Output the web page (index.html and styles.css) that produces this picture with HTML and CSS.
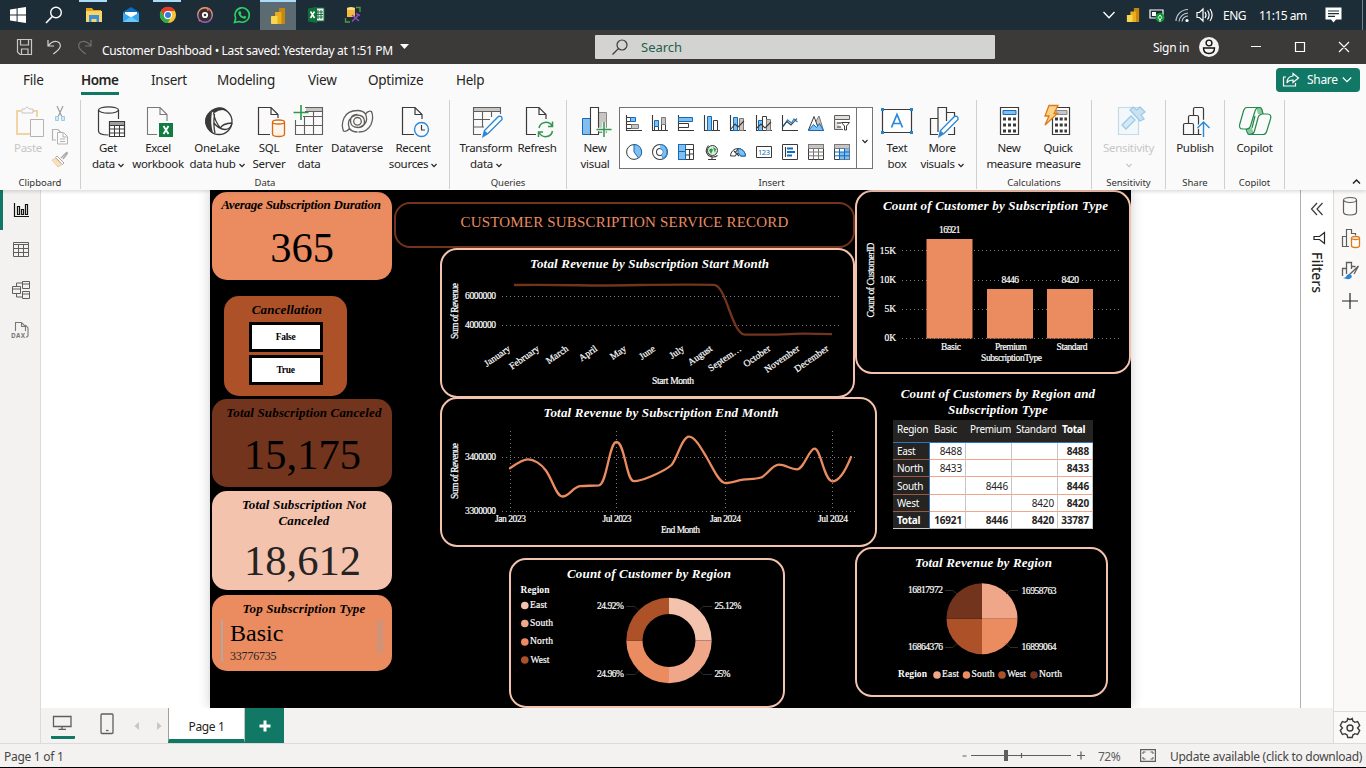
FILE: index.html
```html
<!DOCTYPE html>
<html lang="en">
<head>
<meta charset="utf-8">
<title>Customer Dashboad</title>
<link rel="stylesheet" href="styles.css">
</head>
<body>
<svg width="0" height="0" class="defs">
  <defs>
    <symbol id="pbi" viewBox="0 0 16 18"><rect x="9" y="1" width="6" height="16" rx=".7" fill="#c9860f"/><rect x="5" y="5" width="6.5" height="12" rx=".7" fill="#e8ae1c"/><rect x="1" y="9" width="6.5" height="8" rx=".7" fill="#f8d64e"/></symbol>
    <symbol id="chev" viewBox="0 0 6 5"><path d="M.5 1l2.5 2.6L5.500 1" fill="none" stroke="currentColor" stroke-width="1.200"/></symbol>
  </defs>
</svg>
<header class="taskbar">
  <div class="apps">
    <span class="app sys"><svg width="18" height="18"><path d="M1 3.500l6.600-1v6H1zM8.600 2.300L17 1v7.500H8.600zM1 9.500h6.600v6L1 14.600zM8.600 9.500H17V17l-8.400-1.200z" fill="#fff"/></svg></span>
    <span class="app sys"><svg width="18" height="18"><circle cx="11" cy="6.500" r="5.300" fill="none" stroke="#fff" stroke-width="1.400"/><path d="M7.300 10.500L1 17" stroke="#fff" stroke-width="1.600"/></svg></span>
    <span class="app gap open"><svg width="18" height="18"><path d="M1 2h6l1.500 2H16v12H1z" fill="#e8a317"/><path d="M1 5h16v11H1z" fill="#fbd567"/><path d="M4 9h10v7h-2.500v-3h-5v3H4z" fill="#3f8edb"/></svg></span>
    <span class="app"><svg width="18" height="18"><path d="M1 6l8-5 8 5v10H1z" fill="#0f6cbd"/><path d="M3 6h12v6H3z" fill="#fff"/><path d="M1 6.500l8 5 8-5V16H1z" fill="#35a7ee"/><path d="M1 16l8-5.500L17 16z" fill="#67c8fa"/></svg></span>
    <span class="app open"><svg width="18" height="18"><circle cx="9" cy="9" r="8" fill="#f7c52d"/><path d="M2 5a8 8 0 0 1 14 0H9a4 4 0 0 0-3.500 6z" fill="#e33b2e"/><path d="M2 5l4 7a4 4 0 0 0 5 .7L9 17A8 8 0 0 1 2 5z" fill="#2da94f"/><circle cx="9" cy="9" r="4" fill="#fff"/><circle cx="9" cy="9" r="3" fill="#2f7de1"/></svg></span>
    <span class="app"><svg width="18" height="18"><defs><linearGradient id="gr" x1="0" y1="0" x2="0" y2="1"><stop offset="0" stop-color="#f4a261"/><stop offset="1" stop-color="#9a5fd0"/></linearGradient></defs><circle cx="9" cy="9" r="7.300" fill="#39302f" stroke="url(#gr)" stroke-width="1.400"/><circle cx="9" cy="9" r="2.200" fill="none" stroke="#fff" stroke-width="1.800"/><path d="M11 4l3-1M4 14l-1 1" stroke="#e06666" stroke-width="2"/></svg></span>
    <span class="app"><svg width="18" height="18"><path d="M1.500 16.500l1.200-4.200A7.200 7.200 0 1 1 6 15.500z" fill="none" stroke="#2bd366" stroke-width="1.600"/><path d="M6.200 5.200l1.300 0 .9 2-.8 1q.9 1.700 2.700 2.500l1-1 2 1q0 2-2 2-4.800-.8-6-5.500 0-1.300.9-2z" fill="#2bd366"/></svg></span>
    <span class="app active"><svg width="16" height="18"><use href="#pbi"/></svg></span>
    <span class="app"><svg width="18" height="18"><rect x="7" y="2" width="10" height="13" fill="#e9f3ec" stroke="#1d7145"/><path d="M11 4v9M14 4v9M9 6h7M9 8.500h7M9 11h7" stroke="#1d7145"/><path d="M1 2.500L10 1v16l-9-1.500z" fill="#10703c"/><path d="M3.500 5.500l4 6.500M7.500 5.500l-4 6.500" stroke="#fff" stroke-width="1.500"/></svg></span>
    <span class="app"><svg width="18" height="18"><path d="M3 2h8v9H3z" fill="#f6b93b"/><ellipse cx="7" cy="2.500" rx="4" ry="1.500" fill="#ffdf7d"/><path d="M12 1.500h4V6M1.500 12v4H6" fill="none" stroke="#4f9b45" stroke-width="1.300"/><path d="M8 9l7 6M15 8.500l-7 7M12 7.500l4 2" stroke="#8e4bb8" stroke-width="1.600"/></svg></span>
  </div>
  <div class="tray">
    <svg class="t1" width="14" height="10"><path d="M1.500 2L7 7.800 12.500 2" fill="none" stroke="#fff" stroke-width="1.300"/></svg>
    <svg class="t2" width="14" height="18"><use href="#pbi"/></svg>
    <svg class="t3" width="18" height="16"><path d="M1 3h13v8H1z" fill="none" stroke="#fff" stroke-width="1.200"/><path d="M3 5h4v4H3z" fill="#fff"/><circle cx="11" cy="10.500" r="4.500" fill="#129b36"/><path d="M11 8l1.800 2.500L11 13l-1.800-2.500zM11 12v3" fill="none" stroke="#fff"/></svg>
    <svg class="t4" width="16" height="16"><g fill="none" stroke="#c3cace" stroke-width="1.200"><path d="M1 14A12 12 0 0 1 13 2.500M4 14.500A9.500 9.500 0 0 1 13 6M7 14.500a6.500 6.500 0 0 1 6-5.500"/></g><circle cx="12" cy="13.500" r="1.600" fill="#fff"/></svg>
    <svg class="t5" width="18" height="16"><g fill="none" stroke="#fff" stroke-width="1.200"><path d="M1 5.500h2.500L7 2v12L3.500 10.500H1zM9 5q2 3 0 6M11.500 3.500q3.200 4.500 0 9M14 2q4.200 6 0 12"/></g></svg>
    <span class="lang">ENG</span><span class="clock">11:15 am</span>
    <svg class="t6" width="17" height="17"><path d="M.5.500h16v12H11l-2.500 3-2.500-3H.5z" fill="#fff"/><path d="M3 4h11M3 6.700h11M3 9.400h7" stroke="#1d2e38" stroke-width="1.200"/></svg>
    <i class="peek"></i>
  </div>
</header>

<div class="titlebar">
  <svg class="save" width="18" height="18"><path d="M1.500 1.500h14v15H4l-2.500-2.500zM4.500 1.500v5.500h8V1.500M5.500 16v-5h6.500v5" fill="none" stroke="#c9c8c7" stroke-width="1.200"/></svg>
  <svg class="undo" width="18" height="18"><path d="M2 2v6h6M2 8q4-5 8.500-4.500 3.800.5 3.800 4.500 0 3-7 8" fill="none" stroke="#d6d5d4" stroke-width="1.200"/></svg>
  <svg class="redo" width="18" height="18"><path d="M15 2v6H9M15 8Q11 3 6.500 3.500 2.700 4 2.700 8q0 3 7 8" fill="none" stroke="#73716f" stroke-width="1.200"/></svg>
  <span class="doc">Customer Dashboad • Last saved: Yesterday at 1:51 PM</span>
  <svg class="caret" width="9" height="6"><path d="M0 0h9L4.500 5z" fill="#fff"/></svg>
  <div class="search"><svg width="18" height="18"><circle cx="11" cy="7" r="5" fill="none" stroke="#3b3a39" stroke-width="1.200"/><path d="M7.400 10.600L1.500 16.500" stroke="#3b3a39" stroke-width="1.300"/></svg><span>Search</span></div>
  <span class="signin">Sign in</span>
  <svg class="avatar" width="20" height="20"><circle cx="10" cy="10" r="10" fill="#f3f2f1"/><circle cx="10" cy="6" r="2.900" fill="none" stroke="#111" stroke-width="1.400"/><path d="M4.500 11h11q0 5.500-5.500 5.500T4.500 11z" fill="none" stroke="#111" stroke-width="1.400"/></svg>
  <svg class="winctl" width="100" height="14"><path d="M1 6.500h10M45.500 2.500h9v9h-9zM89 2l10 10M99 2L89 12" fill="none" stroke="#fff" stroke-width="1.200"/></svg>
</div>

<nav class="menu">
  <a class="m-file">File</a><a class="m-home"><b>Home</b></a><a class="m-insert">Insert</a><a class="m-model">Modeling</a><a class="m-view">View</a><a class="m-opt">Optimize</a><a>Help</a>
  <button class="share"><svg width="18" height="16"><path d="M4 5H1.500v9h12v-3M11 1.500L16.500 6 11 10.500V8Q6.500 8 5 11q0-6.500 6-7z" fill="none" stroke="#fff" stroke-width="1.200"/></svg><span>Share</span><svg width="10" height="8"><path d="M.8 1.500L5 5.700l4.200-4.200" fill="none" stroke="#fff" stroke-width="1.200"/></svg></button>
</nav>

<section class="ribbon">
  <div class="group g-clip"><div class="items">
    <div class="btn w-paste off"><svg class="ic" width="32" height="32"><path d="M9 6H5v23h14M21 6h4v6" fill="none" stroke="#f3d3a5" stroke-width="2"/><path d="M10 4h3q2-4 4 0h4v4H10z" fill="#fafafa" stroke="#c8c6c4"/><path d="M18.500 14.500h13v17h-13z" fill="#fafafa" stroke="#b5b3b1"/></svg><span>Paste</span></div>
    <div class="tools">
      <svg width="18" height="17"><path d="M6 1l5 11M12 1L7 12" stroke="#a19f9d" stroke-width="1.200"/><path d="M4.500 11.500h3v4h-3zM10.500 11.500h3v4h-3z" fill="#d5e9f5" stroke="#9ccbe9"/></svg>
      <svg width="18" height="17"><path d="M5 12H1.500V1.500H7l3 3" fill="none" stroke="#b5b3b1" stroke-width="1.200"/><path d="M6.500 4.500h6l4 4v7.500h-10zM12 5v4h4M9 11h5M9 13.500h5" fill="#fafafa" stroke="#b5b3b1"/></svg>
      <svg width="18" height="17"><path d="M10 7l4-4q3-3 2 0l-4 5" fill="none" stroke="#a8a6a4" stroke-width="1.300"/><path d="M6 5l7 7-1.500 1.500-7-7z" fill="#fff" stroke="#a8a6a4"/><path d="M4 7.500l7 6-4 2.500L1 9z" fill="#fbe0bd" stroke="#f0cda0"/></svg>
    </div>
  </div><h4>Clipboard</h4></div>

  <div class="group g-data"><div class="items">
    <div class="btn w54"><svg class="ic" width="32" height="32"><path d="M6.500 5v21q0 4 10 4M26.500 5v9" fill="none" stroke="#3b3a39" stroke-width="1.200"/><ellipse cx="16.500" cy="5" rx="10" ry="3.200" fill="none" stroke="#3b3a39" stroke-width="1.200"/><path d="M17.500 16.500h15v15h-15z" fill="#fff" stroke="#3b3a39" stroke-width="1.200"/><path d="M18 17h14v3H18z" fill="#a19f9d"/><path d="M17.500 20.500h15M17.500 24h15M17.500 28h15M22.500 20v11.500M27.500 20v11.500" stroke="#3b3a39"/></svg><span>Get</span><span>data <svg class="cv"><use href="#chev"/></svg></span></div>
    <div class="btn w46"><svg class="ic" width="32" height="32"><path d="M15 29.500H5.500v-27H18l7 7V16M18 2.500v7h7" fill="none" stroke="#7a7876" stroke-width="1.100"/><path d="M17 18h14v14H17z" fill="#107c41"/><path d="M21.500 21l5 8M26.500 21l-5 8" stroke="#fff" stroke-width="1.800"/></svg><span>Excel</span><span>workbook</span></div>
    <div class="btn w72"><svg class="ic" width="32" height="32"><circle cx="18" cy="16.500" r="13" fill="#fafafa" stroke="#3b3a39" stroke-width="1.300"/><path d="M10.500 6.500Q14 2 19 2.200q5 .3 7.500 3.800-7-2.500-13 2z" fill="#3b3a39"/><path d="M11 6.500Q3.500 9 4 17q.5 6.500 8 11-3-10-1-21.500z" fill="#3b3a39"/><path d="M12.500 7.500Q14 17 19.500 23q2-4.500 11.500-5M13.500 9Q12 20 14 28M31 18q-1 6-7 6.500-6 0-11.500-7" fill="none" stroke="#3b3a39" stroke-width="1.300"/></svg><span>OneLake</span><span>data hub<svg class="cv"><use href="#chev"/></svg></span></div>
    <div class="btn w32"><svg class="ic" width="32" height="32"><path d="M17 29.500H5.500v-27H18l7 7V13M18 2.500v7h7" fill="none" stroke="#3b3a39" stroke-width="1.200"/><path d="M19.500 17v12q0 2.500 6 2.500t6-2.500V17" fill="#fff4ea" stroke="#d8690f" stroke-width="1.300"/><ellipse cx="25.500" cy="17" rx="6" ry="2" fill="#fff" stroke="#d8690f" stroke-width="1.300"/></svg><span>SQL</span><span>Server</span></div>
    <div class="btn w48"><svg class="ic" width="32" height="32"><path d="M13 2.500h17v4H13z" fill="#c8c6c4"/><path d="M12 2.500h17.500v27h-27V15M2.500 20.500h27M10 11.500h19.500M11.500 12v17.500M20.500 6.500v23M12 6.500h17.500" fill="none" stroke="#605e5c" stroke-width="1.100"/><path d="M8 0v15M.5 7.500h15" stroke="#2d9947" stroke-width="1.600"/></svg><span>Enter</span><span>data</span></div>
    <div class="btn w48"><svg class="ic" width="32" height="32"><g fill="none" stroke="#605e5c" stroke-width="1.300"><path d="M16.500 5.500q5.500 0 8 3.500 3-4 6-2.500 2.500 6-.5 13-3.500 7.500-12.500 7.500M16.500 27q-5.500 0-8-3.500-3 4-6 2.500Q0 20 3 13q3.500-7.500 13.500-7.500M24.500 9q4 10-7 13.500-8 0-8-6.500t7-6.500M8.500 23.500Q4.500 13.500 15.500 10q8 0 8 6.500t-7 6"/><circle cx="16.500" cy="16.300" r="3.800"/></g></svg><span>Dataverse</span></div>
    <div class="btn w64"><svg class="ic" width="32" height="32"><path d="M17 29.500H5.500v-27H18l7 7V14M18 2.500v7h7" fill="none" stroke="#3b3a39" stroke-width="1.200"/><circle cx="24.500" cy="24.500" r="7" fill="#fafafa" stroke="#2b88d8" stroke-width="1.400"/><path d="M24.500 20v5H28" fill="none" stroke="#3b3a39" stroke-width="1.200"/></svg><span>Recent</span><span>sources<svg class="cv"><use href="#chev"/></svg></span></div>
  </div><h4>Data</h4></div>

  <div class="group g-query"><div class="items">
    <div class="btn w72"><svg class="ic" width="32" height="32"><path d="M3.500 2.500h27v4h-27z" fill="#c8c6c4"/><path d="M30.500 9V2.500h-27v27H11M3.500 6.500h27M3.500 14.500H20M3.500 22H14M12.500 6.500V22M21.500 6.500V12" fill="none" stroke="#605e5c" stroke-width="1.100"/><path d="M28.500 11.500q4-1 3.500 3L18 28.500l-5 3 1.500-6z" fill="#fff" stroke="#2b88d8" stroke-width="1.400"/><path d="M14.500 25.500l3.500 3-5 3z" fill="#2b88d8"/></svg><span>Transform</span><span>data <svg class="cv"><use href="#chev"/></svg></span></div>
    <div class="btn w30"><svg class="ic" width="32" height="32"><path d="M15 29.500H5.500v-27H18l7 7V14M18 2.500v7h7" fill="none" stroke="#3b3a39" stroke-width="1.200"/><path d="M18 23a7 7 0 0 1 13-2M31.500 26a7 7 0 0 1-13 2M31.500 16.500V21.500H27M17.500 32v-5H22" fill="none" stroke="#31964b" stroke-width="1.500"/></svg><span>Refresh</span></div>
  </div><h4>Queries</h4></div>

  <div class="group g-insert"><div class="items">
    <div class="btn w46"><svg class="ic" width="32" height="32"><path d="M3.500 13.500h8v16h-8z" fill="#83beec" stroke="#0f6cbd"/><path d="M19.500 7.500h8v20h-8z" fill="#c8c6c4" stroke="#8a8886"/><path d="M11.500 2.500h8v27h-8z" fill="#fff" stroke="#3b3a39" stroke-width="1.100"/><path d="M25 17v15M17.500 24.500h15" stroke="#fafafa" stroke-width="3.500"/><path d="M25 17v15M17.500 24.500h15" stroke="#31964b" stroke-width="1.500"/></svg><span>New</span><span>visual</span></div>
    <div class="gallery">
      <div class="gal-grid">
        <svg width="16" height="16"><path d="M.5 0v15.500H16" class="ax"/><path d="M.5 2.500h4v4h-4z" class="dk"/><path d="M4.500 2.500h5v4h-5z" class="bl"/><path d="M.5 9.500h5v4h-5z" class="dk"/><path d="M5.500 9.500h7v4h-7z" class="gy"/></svg>
        <svg width="16" height="16"><path d="M.5 0v15.500H16" class="ax"/><path d="M2.500 11.500h4v4h-4zM9.500 9.500h4v6h-4z" class="dk"/><path d="M2.500 5.500h4v6h-4z" class="bl"/><path d="M9.500 2.500h4v7h-4z" class="gy"/></svg>
        <svg width="16" height="16"><path d="M.5 0v15.500H16" class="ax"/><path d="M.5 2.500h14v4H.5z" class="bl"/><path d="M.5 8.500h10v4H.5z" class="dk"/></svg>
        <svg width="16" height="16"><path d="M.5 0v15.500H16" class="ax"/><path d="M3.500 1.500h4v14h-4z" class="bl"/><path d="M9.500 5.500h4v10h-4z" class="dk"/></svg>
        <svg width="16" height="16"><path d="M.5 0v15.500H16" class="ax"/><path d="M3.500 2.500h4v13h-4z" class="bl"/><path d="M9.500 3.500h4v12h-4z" class="gy"/><path d="M1 14l4-5 3 3 6-6" class="ax"/></svg>
        <svg width="16" height="16"><path d="M.5 0v15.500H16" class="ax"/><path d="M2.500 5.500h4v10h-4z" class="bl"/><path d="M6.500 1.500h4v14h-4z" class="dk"/><path d="M10.500 4.500h4v11h-4z" class="gy"/><path d="M1 13l4-4 4 4 6-6" class="ax"/></svg>
        <svg width="16" height="16"><path d="M.5 0v15.500H16" class="ax"/><path d="M1 12l4.500-7 4 3 2.500-4 3.500 3" fill="none" stroke="#2b88d8" stroke-width="1.300"/><path d="M1 11l4-4.500 4 3.500 6-6.500" class="ax"/></svg>
        <svg width="16" height="16"><path d="M7 8l4-7 4.500 14.500z" class="gy"/><path d="M.5 15L6 1.500 11 15z" class="dk"/><path d="M.5 15.500l5-6 3 3 3-4 4 7z" class="bl"/></svg>
        <svg width="16" height="16"><path d="M.5.500h15v4H.5zM.5 4.500v10H9" class="gy2"/><path d="M3 7h4v2H3zM3 11h4v2H3z" fill="#8a8886"/><path d="M7.500 7.500h8l-3 3.500v4h-2v-4z" class="dk"/></svg>
        <svg width="16" height="16"><circle cx="8" cy="8" r="7.400" class="dk"/><path d="M8 8V.6A7.400 7.400 0 0 1 12.500 14z" class="bl"/></svg>
        <svg width="16" height="16"><circle cx="8" cy="8" r="5.500" fill="none" stroke="#3b3a39" stroke-width="5"/><circle cx="8" cy="8" r="5.500" fill="none" stroke="#fff" stroke-width="3"/><path d="M8 2.500A5.500 5.500 0 0 1 10 13" fill="none" stroke="#2b88d8" stroke-width="4.800"/><path d="M8 2.500A5.500 5.500 0 0 1 10.500 12.500" fill="none" stroke="#83beec" stroke-width="2.800"/></svg>
        <svg width="16" height="16"><path d="M.5.500h15v15H.5z" class="dk"/><path d="M.5.500h7v7h-7zM.5 7.500h7v8h-7z" class="bl"/><path d="M7.500 5.500h8M11.500 5.500v10M7.500 11h4M11.500 10h4" class="ax"/></svg>
        <svg width="16" height="16"><circle cx="8.500" cy="6.500" r="5" fill="#d6f0dc" stroke="#3b3a39"/><path d="M5 6q3-3 4 0l-2 4zM9 3l3 2-1 4z" fill="#31964b"/><path d="M4.500 1.500Q0 7 4.500 11.500q5 3 9 0M8 13v2.500M4 15.500h8" class="ax"/></svg>
        <svg width="16" height="16"><path d="M.5 12a7.500 7.500 0 0 1 15 0h-5a2.500 2.500 0 0 0-5 0z" class="dk"/><path d="M8 4.500a7.500 7.500 0 0 1 7.500 7.500h-5q0-2-2.500-2.500z" class="bl"/><path d="M4 7l5 5M5 9l3-4" class="ax"/></svg>
        <svg width="16" height="16"><path d="M.5 2.500h15v11H.5z" class="dk"/><text x="8" y="11" text-anchor="middle" class="n123" textLength="12">123</text></svg>
        <svg width="16" height="16"><path d="M.5.500h15v15H.5z" class="dk"/><path d="M3.500 3v10" class="ax"/><path d="M5 4.500h6M5 8h8M5 11.500h5" stroke="#0f6cbd" stroke-width="2"/></svg>
        <svg width="16" height="16"><path d="M.5.500h15v15H.5z" class="dk"/><path d="M.5.500h15v4H.5z" class="gy"/><path d="M.5 8h15M.5 11.800h15M5.500 4.500v11M10.500 4.500v11" class="ln"/></svg>
        <svg width="16" height="16"><path d="M.5.500h15v15H.5z" class="dk"/><path d="M.5.500h15v4H.5z" class="gy"/><path d="M5.500 8h10v7.500h-10zM10.500 4.500h5V8h-5z" fill="#83beec"/><path d="M.5 8h15M.5 11.800h15M5.500 4.500v11M10.500 4.500v11" stroke="#0f6cbd"/></svg>
      </div>
      <div class="gal-more"><svg class="cv"><use href="#chev"/></svg></div>
    </div>
    <div class="btn w48"><svg class="ic" width="32" height="32"><path d="M1.500 4.500h29v23h-29z" fill="#fff" stroke="#3b3a39" stroke-width="1.200"/><path d="M0 3h3v3H0zM29 3h3v3h-3zM0 26h3v3H0zM29 26h3v3h-3z" fill="#1b87d6"/><path d="M10.500 22.500L16 9.500l5.500 13M12.300 18.500h7.400" fill="none" stroke="#2b88d8" stroke-width="1.700"/></svg><span>Text</span><span>box</span></div>
    <div class="btn w42"><svg class="ic" width="32" height="32"><path d="M12 29.500H4.500v-16h7.500M12 27V2.500h8.500V16M20.500 7.500h8V11M22 29.500h6.500V22" fill="none" stroke="#3b3a39" stroke-width="1.200"/><path d="M28.500 11.500q4-1 3.500 3L18 28.500l-5 3 1.500-6z" fill="#fff" stroke="#2b88d8" stroke-width="1.400"/><path d="M14.500 25.500l3.500 3-5 3z" fill="#2b88d8"/></svg><span>More</span><span>visuals <svg class="cv"><use href="#chev"/></svg></span></div>
  </div><h4>Insert</h4></div>

  <div class="group g-calc"><div class="items">
    <div class="btn w48"><svg class="ic" width="32" height="32"><path d="M7.500 2.500h18v27h-18z" fill="#fff" stroke="#3b3a39" stroke-width="1.200"/><path d="M10 5.500h13v4H10z" fill="#83beec" stroke="#0f6cbd"/><path d="M10 14h13M10 20h13M10 26h13" stroke="#3b3a39" stroke-width="3" stroke-dasharray="3 2"/></svg><span>New</span><span>measure</span></div>
    <div class="btn w50"><svg class="ic" width="32" height="32"><path d="M10.500 2.500h17v27h-17z" fill="#fff" stroke="#3b3a39" stroke-width="1.200"/><path d="M14 5.500h11v4H14z" fill="#c8c6c4" stroke="#8a8886"/><path d="M13 14h12M13 20h12M13 26h12" stroke="#3b3a39" stroke-width="3" stroke-dasharray="3 1.700"/><path d="M7 .5h9l-4 8h3.500L3 20l4-9H3z" fill="#fbd48a" stroke="#e07a14" stroke-width="1.300"/></svg><span>Quick</span><span>measure</span></div>
  </div><h4>Calculations</h4></div>

  <div class="group g-sens"><div class="items">
    <div class="btn w73 off"><svg class="ic" width="32" height="32"><path d="M5.500 2.500h20v27h-20z" fill="#f2f7fb" stroke="#c5d9e6" stroke-width="1.200"/><path d="M9 20l9-9 4 4-9 9z" fill="#d5e9f5" stroke="#9ccbe9" stroke-width="1.300"/><path d="M17 5l3-3 4 3 3-3 5 5-4 3 3 4-4 2z" fill="#c9e1f1" stroke="#9ccbe9" stroke-width="1.300"/></svg><span>Sensitivity</span><span><svg class="cv"><use href="#chev"/></svg></span></div>
  </div><h4>Sensitivity</h4></div>

  <div class="group g-share"><div class="items">
    <div class="btn w58"><svg class="ic" width="32" height="32"><path d="M4.500 29.500V20q0-1.500 1.500-1.500h7q1.500 0 1.500 1.500v9.500zM9.500 18v-6q0-1.500 1.500-1.500h7q1.500 0 1.500 1.500v17.500h-5M14.500 10V4q0-1.500 1.500-1.500h7q1.500 0 1.500 1.500v11M19.500 29.500h3" fill="none" stroke="#3b3a39" stroke-width="1.200"/><path d="M24.500 32V17M18.500 23l6-6 6 6" fill="none" stroke="#fafafa" stroke-width="3.500"/><path d="M24.500 32V17M18.500 23l6-6 6 6" fill="none" stroke="#2b88d8" stroke-width="1.400"/></svg><span>Publish</span></div>
  </div><h4>Share</h4></div>

  <div class="group g-copilot"><div class="items">
    <div class="btn w59"><svg class="ic" width="32" height="32"><path d="M17 2.500h5.500L24.500 9H19zM15 29.500H9.500L7.500 23H13z" fill="#8cc9a0"/><path d="M21.500 2.500H8Q5.500 2.500 4.500 6L.8 19q-1.300 5 3 5h4q3 0 4-4L16 6q1-3.500 4.500-3.500 2 0 2.500 2.500l1 4h4.500q4.300 0 3 5l-3.700 12q-1 3.500-4 3.500H10.500q-1.500 0-2-1.500l-1.500-4M24 9q-4 0-5 4l-3.500 13q-1 3.500-5 3.500M16 11l-3 12" fill="none" stroke="#208a4c" stroke-width="1.200"/></svg><span>Copilot</span></div>
  </div><h4>Copilot</h4></div>
  <svg class="collapse" width="9" height="7"><path d="M1 5.500L4.500 2 8 5.500" fill="none" stroke="#252423" stroke-width="1.500"/></svg>
</section>

<main class="work">
  <aside class="rail">
    <span class="r on"><svg width="18" height="18"><path d="M2.500 2v13.500H17M5.500 5.500h2v8h-2zM9.500 8.500h2v5h-2zM13.500 3.500h2v10h-2z" fill="none" stroke="#111" stroke-width="1.200"/></svg></span>
    <span class="r"><svg width="18" height="18"><path d="M1.500 1.500h15v14h-15zM1.500 3.500h15M1.500 7.500h15M1.500 11.500h15M6.500 3.500v12M11.500 3.500v12" fill="none" stroke="#605e5c"/></svg></span>
    <span class="r"><svg width="20" height="20"><path d="M1.500 6.500h8v7h-8zM1.500 9h8M11.500 1.500h7v7h-7zM11.500 4h7M11.500 11.500h7v7h-7zM11.500 14h7M5.500 6.500V3h6M5.500 13.500V17h6" fill="none" stroke="#605e5c"/></svg></span>
    <span class="r"><svg width="20" height="20"><path d="M4.500 11V2.500h6l4 4V11M10.500 2.500v4h4M14.500 5l2.500 3v8l-2 1.500" fill="none" stroke="#7a7876" stroke-width="1.100"/><text x="0" y="18" class="dax" textLength="14">DAX</text></svg></span>
  </aside>

  <div class="center">
    <div class="stage">
      <div class="page">
        <article class="card k-avg"><h3>Average Subscription Duration</h3><p>365</p></article>
        <article class="card k-cancel"><h3>Cancellation</h3><button>False</button><button>True</button></article>
        <article class="card k-yes"><h3>Total Subscription Canceled</h3><p>15,175</p></article>
        <article class="card k-not"><h3>Total Subscription Not<br>Canceled</h3><p>18,612</p></article>
        <article class="card k-top"><h3>Top Subscription Type</h3><div class="multi"><strong>Basic</strong><small>33776735</small></div></article>

        <header class="banner">CUSTOMER SUBSCRIPTION SERVICE RECORD</header>

        <svg class="vis v-start" viewBox="440 248 415 150">
          <text class="ttl" x="530" y="268" textLength="239">Total Revenue by Subscription Start Month</text>
          <text transform="translate(458 339) rotate(-90)" textLength="56">Sum of Revenue</text>
          <text x="465" y="299" textLength="31">6000000</text><text x="465" y="328" textLength="31">4000000</text>
          <path class="grid" d="M502 296.500h340M502 325.500h340"/>
          <path d="M514 285C560 284.500 580 285.500 600 285.500C640 285.300 670 284 714 284.800C726 284.800 732 334.500 745 334.700L765 334.700C785 334.600 795 333.500 805 333.700L832 334.200" fill="none" stroke="#72341c" stroke-width="2.300"/>
          <g text-anchor="end" class="months">
            <text transform="translate(511 350) rotate(-35)">January</text><text transform="translate(540 350) rotate(-35)">February</text><text transform="translate(569 350) rotate(-35)">March</text><text transform="translate(598 350) rotate(-35)">April</text><text transform="translate(627 350) rotate(-35)">May</text><text transform="translate(656 350) rotate(-35)">June</text><text transform="translate(685 350) rotate(-35)">July</text><text transform="translate(713 350) rotate(-35)">August</text><text transform="translate(742 350) rotate(-35)">Septem…</text><text transform="translate(771 350) rotate(-35)">October</text><text transform="translate(800 350) rotate(-35)">November</text><text transform="translate(829 350) rotate(-35)">December</text>
          </g>
          <text x="652" y="384" textLength="42">Start Month</text>
        </svg>

        <svg class="vis v-end" viewBox="440 397 437 150">
          <text class="ttl" x="543.500" y="417" textLength="235">Total Revenue by Subscription End Month</text>
          <text transform="translate(458 499) rotate(-90)" textLength="56">Sum of Revenue</text>
          <text x="465" y="460" textLength="31">3400000</text><text x="465" y="514" textLength="31">3300000</text>
          <path class="grid" d="M502 457.500h355M502 511.500h355M510.500 431v80M616.500 431v80M725.500 431v80M832.500 431v80"/>
          <path d="M510 468.300C516 464 522 459.300 528 459.300C534 459.300 541 464 545.500 470C553 480 556 496.500 562.500 496.500C569 496.500 573 487 580 486.200C586 485.500 593 486 599 485.300C607 484 609 442 616.500 442C625 442 626 481.200 634 481.200C640 481.200 646 478.500 652 476C659 473 666 470 671.500 465C677 459 682 436.700 689 436.700C695 436.700 701 448 707 458C713 468 719 483 725.500 483C731 483 737 480.500 743 479.700C749 478.800 755 479.500 761 477.500C767 475.500 772 464.700 779 464.700C785 464.700 791 469.300 797 469.300C804 469.300 809 448.700 814.500 448.700C821 448.700 824 481.300 832.500 481.300C839 481.300 845 472 851 457" fill="none" stroke="#ea8b60" stroke-width="2.300" stroke-linecap="round"/>
          <text x="495" y="522" textLength="31">Jan 2023</text><text x="602.500" y="522" textLength="29">Jul 2023</text><text x="710" y="522" textLength="31">Jan 2024</text><text x="818" y="522" textLength="30">Jul 2024</text>
          <text x="661" y="533" textLength="39">End Month</text>
        </svg>

        <svg class="vis v-donut" viewBox="509 558 276 150">
          <text class="ttl" x="567" y="578" textLength="164">Count of Customer by Region</text>
          <text class="b" x="520.500" y="593" textLength="29">Region</text>
          <circle cx="524.800" cy="605.500" r="3.800" fill="#f4c3ae"/><circle cx="524.800" cy="623.500" r="3.800" fill="#f0a688"/><circle cx="524.800" cy="642" r="3.800" fill="#ea8b60"/><circle cx="524.800" cy="660" r="3.800" fill="#ad5129"/>
          <text x="530" y="608" textLength="17">East</text><text x="530" y="626" textLength="23">South</text><text x="530" y="644" textLength="23">North</text><text x="530.500" y="663" textLength="19">West</text>
          <path d="M669 597.800a42.700 42.700 0 0 1 42.700 42.700h-16.200a26.500 26.500 0 0 0-26.500-26.500z" fill="#f4c3ae"/>
          <path d="M711.700 640.500a42.700 42.700 0 0 1-42.700 42.700v-16.200a26.500 26.500 0 0 0 26.500-26.500z" fill="#f0a688"/>
          <path d="M669 683.200a42.700 42.700 0 0 1-42.700-42.700h16.200a26.500 26.500 0 0 0 26.500 26.500z" fill="#ea8b60"/>
          <path d="M626.300 640.500a42.700 42.700 0 0 1 42.700-42.700v16.200a26.500 26.500 0 0 0-26.500 26.500z" fill="#ad5129"/>
          <path class="lead" d="M626 606.500h9l4 4M712 606.500h-9l-4 4M626 674.500h9l4-4M712 674.500h-9l-4-4"/>
          <text x="597" y="609" textLength="27">24.92%</text><text x="714.500" y="609" textLength="27">25.12%</text><text x="597" y="677" textLength="27">24.96%</text><text x="714.500" y="677" textLength="16">25%</text>
        </svg>

        <svg class="vis v-bar" viewBox="855 190 276 184">
          <text class="ttl" x="883" y="210" textLength="225">Count of Customer by Subscription Type</text>
          <text transform="translate(873.500 317.500) rotate(-90)" textLength="75">Count of CustomerID</text>
          <g text-anchor="end"><text x="896" y="254">15K</text><text x="896" y="283">10K</text><text x="896" y="312">5K</text><text x="896" y="341">0K</text></g>
          <path class="grid" d="M902 250.500h217M902 280.500h217M902 309.500h217M902 338.500h217"/>
          <path d="M926.500 239h46v99.500h-46zM987 289h46v49.500h-46zM1047 289h46v49.500h-46z" fill="#ea8b60"/>
          <path d="M999 276h22v9h-22zM1059 276h22v9h-22z" fill="#000"/>
          <text x="939" y="233" textLength="21.500">16921</text><text x="1001.500" y="283" textLength="17.500">8446</text><text x="1061.500" y="283" textLength="17.500">8420</text>
          <text x="941" y="350" textLength="20">Basic</text><text x="995" y="350" textLength="32">Premium</text><text x="1056.500" y="350" textLength="31">Standard</text>
          <text x="981" y="361" textLength="61">SubscriptionType</text>
        </svg>

        <section class="matrix">
          <h3>Count of Customers by Region and<br>Subscription Type</h3>
          <table>
            <colgroup><col class="c1"><col class="c2"><col class="c3"><col class="c4"><col class="c5"></colgroup>
            <thead><tr><th>Region</th><th>Basic</th><th>Premium</th><th>Standard</th><th class="tot">Total</th></tr></thead>
            <tbody>
              <tr><th>East</th><td>8488</td><td></td><td></td><td class="tot">8488</td></tr>
              <tr><th>North</th><td>8433</td><td></td><td></td><td class="tot">8433</td></tr>
              <tr><th>South</th><td></td><td>8446</td><td></td><td class="tot">8446</td></tr>
              <tr><th>West</th><td></td><td></td><td>8420</td><td class="tot">8420</td></tr>
              <tr class="tot"><th class="tot">Total</th><td>16921</td><td>8446</td><td>8420</td><td>33787</td></tr>
            </tbody>
          </table>
        </section>

        <svg class="vis v-pie" viewBox="855 547 253 150">
          <text class="ttl" x="915" y="567" textLength="137">Total Revenue by Region</text>
          <path d="M982 618.700V583.200a35.500 35.500 0 0 1 35.500 35.500z" fill="#f0a688"/>
          <path d="M982 618.700h35.500a35.500 35.500 0 0 1-35.500 35.500z" fill="#ea8b60"/>
          <path d="M982 618.700v35.500a35.500 35.500 0 0 1-35.500-35.500z" fill="#ad5129"/>
          <path d="M982 618.700h-35.500a35.500 35.500 0 0 1 35.500-35.500z" fill="#72341c"/>
          <path class="lead" d="M945 590.500h8l4 3.500M1018 590.500h-8l-4 3.500M945 647.500h8l4-4M1018 647.500h-8l-4-4"/>
          <text x="908" y="593" textLength="35">16817972</text><text x="1021.500" y="594" textLength="35">16958763</text><text x="908" y="650" textLength="35">16864376</text><text x="1021.500" y="650" textLength="35">16899064</text>
          <text class="b" x="898" y="677" textLength="29">Region</text>
          <circle cx="937" cy="675" r="3.800" fill="#f0a688"/><circle cx="966.500" cy="675" r="3.800" fill="#ea8b60"/><circle cx="1002" cy="675" r="3.800" fill="#ad5129"/><circle cx="1034" cy="675" r="3.800" fill="#72341c"/>
          <text x="942" y="677" textLength="17">East</text><text x="971.500" y="677" textLength="23">South</text><text x="1007" y="677" textLength="19">West</text><text x="1039" y="677" textLength="23">North</text>
        </svg>
      </div>
      <aside class="filters">
        <svg width="14" height="14"><path d="M7 1L1.500 7 7 13M12.500 1L7 7l5.500 6" fill="none" stroke="#3b3a39" stroke-width="1.200"/></svg>
        <svg class="funnel" width="14" height="14"><path d="M12.500 1.500v11L7.500 8.500H2v-3h5.500z" fill="none" stroke="#252423" stroke-width="1.200"/></svg>
        <span>Filters</span>
      </aside>
    </div>
    <footer class="tabs">
      <span class="view desk"><svg width="20" height="16"><path d="M1.500 1.500h17.500v10H1.500zM10 11.500v2.500M6.500 14.300h7.500" fill="none" stroke="#605e5c" stroke-width="1.300"/></svg></span>
      <svg class="phone" width="14" height="22"><rect x="1" y="1" width="12" height="19.500" rx="1" fill="none" stroke="#605e5c" stroke-width="1.300"/><path d="M6 17.500h2.500" stroke="#605e5c" stroke-width="1.300"/></svg>
      <svg class="prev" width="6" height="9"><path d="M5 0v8L.5 4z" fill="#c8c6c4"/></svg>
      <svg class="next" width="6" height="9"><path d="M1 0v8l4.500-4z" fill="#c8c6c4"/></svg>
      <span class="tab">Page 1</span>
      <button class="add"><svg width="12" height="12"><path d="M6 .5v11M.5 6h11" stroke="#fff" stroke-width="3"/></svg></button>
    </footer>
  </div>

  <aside class="panes">
    <svg class="p" width="18" height="20"><path d="M2.500 4v12q0 3 6.500 3t6.500-3V4" fill="none" stroke="#605e5c" stroke-width="1.200"/><ellipse cx="9" cy="4" rx="6.500" ry="2.500" fill="none" stroke="#605e5c" stroke-width="1.200"/></svg>
    <svg class="p" width="20" height="20"><path d="M9 18.500H2.500V8.500h4M6.500 18V1.500h5V6M11.500 5.500h4v2" fill="none" stroke="#605e5c" stroke-width="1.200"/><path d="M11.500 10v7.500q0 2 4 2t4-2V10" fill="#fff" stroke="#e07a14" stroke-width="1.300"/><ellipse cx="15.500" cy="10" rx="4" ry="1.500" fill="#fff" stroke="#e07a14" stroke-width="1.300"/></svg>
    <svg class="p" width="20" height="20"><path d="M2.500 16V8.500h4V14M6.500 13V2.500h5V9M11.500 6.500h4M14 14l4.500-8L9 15" fill="none" stroke="#605e5c" stroke-width="1.300"/><path d="M3 18q3 0 4-3 3-2 5 1-1 5-9 2z" fill="#2b88d8"/></svg>
    <svg class="p" width="18" height="18"><path d="M9 1v16M1 9h16" stroke="#252423" stroke-width="1.200"/></svg>
    <span class="gear"><svg width="22" height="22"><path d="M8.800 1.500L8 4.200Q7 4.600 6.200 5.300L3.400 4.500 1.300 8.500 3.400 11 1.300 13.500l2.100 4 2.800-.8q.8.700 1.800 1.100l.8 2.700h4.400l.8-2.700q1-.4 1.800-1.100l2.800.8 2.100-4L18.600 11l2.100-2.500-2.100-4-2.800.8Q15 4.600 14 4.200l-.8-2.700q-2.200 2-4.400 0z" fill="none" stroke="#3b3a39" stroke-width="1.400"/><circle cx="11" cy="11" r="3" fill="none" stroke="#3b3a39" stroke-width="1.400"/></svg></span>
  </aside>
</main>

<footer class="status">
  <span class="count">Page 1 of 1</span>
  <svg class="zoom" width="126" height="16"><path d="M1.500 9h4M10 8.500h100M116 8.500h8M120 4.500v8M60.500 6v5" fill="none" stroke="#605e5c" stroke-width="1.200"/><path d="M43 3h4v11h-4z" fill="#605e5c"/></svg>
  <span class="pct">72%</span>
  <svg class="fit" width="16" height="13"><path d="M.6.600h14.800v11.800H.6z" fill="none" stroke="#605e5c" stroke-width="1.200"/><path d="M3 5V3h2.500M10.500 3H13v2M13 8v2h-2.500M5.500 10H3V8" fill="none" stroke="#605e5c"/></svg>
  <span class="update">Update available (click to download)</span>
</footer>
</body>
</html>
```
FILE: styles.css
```css
* { box-sizing: border-box; }
body { margin: 0; width: 1366px; height: 768px; overflow: hidden; display: flex; flex-direction: column; font-family: "Noto Sans", "Open Sans", sans-serif; font-size: 12px; color: #252423; background: #000; }
svg { display: block; flex: none; overflow: visible; }
button { font: inherit; border: 0; padding: 0; }
h3, h4, p { margin: 0; font-weight: normal; }
.defs { position: absolute; }

.taskbar { height: 30px; flex: none; background: #1c2d37; display: flex; justify-content: space-between; color: #fff; }
.apps, .tray { display: flex; align-items: center; }
.app { width: 37px; height: 30px; display: flex; align-items: center; justify-content: center; }
.app.sys { width: 36px; }
.app.gap { margin-left: 3px; }
.app.open { background: linear-gradient(#a9dcf8, #a9dcf8) 4px 0 / 28px 2px no-repeat; }
.app.active { width: 36px; margin-right: 1px; background: #5c6a72; border-top: 2px solid #a9dcf8; }
.t1 { margin-right: 10px; }
.t2 { margin-right: 9px; }
.t3 { margin-right: 8px; }
.t4 { margin-right: 5px; }
.t5 { margin-right: 9px; }
.lang { width: 36px; letter-spacing: -0.5px; }
.clock { width: 66px; letter-spacing: -0.5px; white-space: nowrap; }
.t6 { margin-right: 20px; }
.peek { width: 1px; height: 30px; background: #77828a; margin-right: 3px; }

.titlebar { height: 34px; flex: none; background: #3b3a39; color: #fff; display: flex; align-items: center; padding-left: 16px; }
.save { margin-right: 12px; }
.undo { margin-right: 12px; }
.redo { margin-right: 8px; }
.doc { width: 298px; padding-top: 7px; white-space: nowrap; letter-spacing: -0.35px; }
.search { width: 400px; height: 24px; margin-left: 186px; padding-left: 16px; background: #d3d3d1; display: flex; align-items: center; gap: 12px; color: #1f5f50; font-size: 13px; border-radius: 1px; }
.signin { margin-left: 158px; width: 46px; letter-spacing: -0.3px; white-space: nowrap; }
.winctl { margin-left: 31px; }

.menu { height: 36px; flex: none; background: #fafafa; display: flex; padding-left: 23px; font-size: 13.500px; line-height: 32px; position: relative; z-index: 3; }
.menu a { white-space: nowrap; letter-spacing: -0.25px; }
.m-file { width: 58px; }
.m-home { width: 70px; }
.m-home b { display: inline-block; width: 38px; height: 31px; font-weight: 600; letter-spacing: -0.5px; border-bottom: 3px solid #117865; }
.m-insert { width: 66px; }
.m-model { width: 91px; }
.m-view { width: 60px; }
.m-opt { width: 88px; }
.share { margin: 4px 6px 0 auto; width: 84px; height: 24px; border-radius: 4px; background: #117865; color: #fff; display: flex; align-items: center; padding-left: 6px; font-size: 12px; letter-spacing: -0.3px; line-height: 24px; }
.share span { width: 35px; margin-left: 7px; text-align: left; }

.ribbon { height: 90px; flex: none; background: #fafafa; display: flex; position: relative; z-index: 2; box-shadow: 0 2px 3px rgba(0,0,0,.13); }
.group { height: 89px; border-right: 1px solid #d2d0ce; display: flex; flex-direction: column; justify-content: space-between; }
.items { display: flex; padding-top: 5px; }
.group h4 { font-size: 9.500px; line-height: 12px; text-align: center; color: #323130; letter-spacing: -0.05px; }
.g-clip { width: 81px; }
.g-data { width: 369px; }
.g-query { width: 117px; }
.g-insert { width: 410px; }
.g-insert .items { padding-left: 5px; }
.g-calc { width: 115px; }
.g-calc .items { padding-left: 8px; }
.g-sens { width: 74px; }
.g-share { width: 59px; }
.g-copilot { width: 60px; }
.btn { display: flex; flex-direction: column; align-items: center; flex: none; }
.btn span { line-height: 16px; white-space: nowrap; font-size: 11.500px; letter-spacing: -0.3px; display: flex; align-items: center; gap: 3px; min-height: 16px; }
.ic { margin-bottom: 3px; }
.btn.off { color: #c8c6c4; }
.cv { width: 6px; height: 5px; margin-top: 2px; }
.w-paste { width: 56px; }
.w30 { width: 30px; }
.w32 { width: 32px; }
.w42 { width: 42px; }
.w46 { width: 46px; }
.w48 { width: 48px; }
.w50 { width: 50px; }
.w54 { width: 54px; }
.w58 { width: 58px; }
.w59 { width: 59px; }
.w64 { width: 64px; }
.w72 { width: 72px; }
.w73 { width: 73px; }
.tools { display: flex; flex-direction: column; gap: 6px; margin-left: -5px; }
.gallery { width: 254px; height: 62px; margin: 2px 0 0 1px; border: 1px solid #767472; background: #fff; display: flex; }
.gal-grid { width: 237px; border-right: 1px solid #767472; padding: 7px 0 0 6px; display: grid; grid-template-columns: repeat(9, 16px); column-gap: 10px; row-gap: 13px; align-content: start; }
.gal-more { flex: 1; display: flex; align-items: center; justify-content: center; padding-top: 5px; }
.ax { fill: none; stroke: #3b3a39; stroke-width: 1.100; }
.dk { fill: #fff; stroke: #3b3a39; }
.bl { fill: #83beec; stroke: #0f6cbd; }
.gy { fill: #c8c6c4; stroke: #7a7876; }
.gy2 { fill: #e1dfdd; stroke: #605e5c; }
.ln { stroke: #7a7876; }
.n123 { font: 7.500px "Noto Sans", sans-serif; fill: #0f6cbd; }
.collapse { margin: auto 5px 5px auto; }

.work { height: 554px; flex: none; display: flex; }
.rail { width: 41px; background: #f3f2f1; border-right: 1px solid #dddbda; border-bottom: 1px solid #dddbda; }
.r { display: flex; height: 40px; align-items: center; justify-content: center; padding-left: 1px; }
.r.on { border-left: 3px solid #117865; padding: 0 2px 0 0; }
.dax { font: bold 6.500px "Noto Sans", sans-serif; fill: #7a7876; stroke: #f3f2f1; stroke-width: 2px; paint-order: stroke; }
.center { width: 1292px; display: flex; flex-direction: column; }
.stage { height: 518px; background: #fff; display: flex; overflow: hidden; padding-left: 169px; }
.page { position: relative; width: 921px; height: 518px; background: #000; box-shadow: 0 0 12px rgba(0,0,0,.2); font-family: "Liberation Serif", serif; }
.filters { width: 33px; margin-left: 169px; border-left: 1px solid #b3b0ad; display: flex; flex-direction: column; align-items: center; padding-top: 12px; }
.funnel { margin: 15px 0 0 3px; }
.filters span { writing-mode: vertical-rl; font-size: 14px; font-weight: 500; line-height: 18px; margin-top: 7px; }

/* Visuals sit freely on the report page */
.card { position: absolute; border-radius: 15px; color: #000; text-align: center; }
.card h3, .matrix h3 { font: italic bold 13px/16px "Liberation Serif", serif; white-space: nowrap; letter-spacing: 0.15px; }
.card p { font-size: 42.500px; line-height: 48px; }
.k-avg { left: 2px; top: 2px; width: 180px; height: 88px; background: #ea8b60; padding-top: 5px; }
.k-avg h3 { letter-spacing: -0.25px; padding-right: 2px; }
.k-avg p { padding-top: 11px; }
.k-cancel { left: 14px; top: 106px; width: 123px; height: 100px; background: #ad5129; padding-top: 6px; display: flex; flex-direction: column; align-items: center; }
.k-cancel button { width: 74px; height: 30px; border: 3px solid #000; background: #fff; font-size: 9.500px; font-weight: bold; letter-spacing: -0.3px; margin-bottom: 3px; }
.k-cancel h3 { margin: 0 0 4px 3px; }
.k-yes { left: 2px; top: 209px; width: 180px; height: 88px; background: #72341c; padding: 6px 0 0 4px; }
.k-yes p { padding: 10px 3px 0 0; }
.k-not { left: 2px; top: 301px; width: 180px; height: 99px; background: #f4c3ae; padding: 6px 0 0 4px; }
.k-not p { color: #252423; padding: 8px 3px 0 0; }
.k-top { left: 2px; top: 405px; width: 180px; height: 76px; background: #ea8b60; padding: 6px 9px 0; }
.k-top h3 { padding-left: 4px; }
.multi { border-left: 2px solid #b5a79f; margin-top: 3px; height: 42px; padding-left: 7px; text-align: left; background: linear-gradient(#cd9479, #cd9479) right top / 6px 33px no-repeat; }
.multi strong { display: block; font-weight: normal; font-size: 24px; line-height: 27px; }
.multi small { display: block; font-size: 12px; line-height: 14px; margin-top: 2px; color: #252423; letter-spacing: -0.2px; }
.banner { position: absolute; left: 184px; top: 12px; width: 461px; height: 46px; border: 2px solid #72341c; border-radius: 16px; color: #ea8b60; font-size: 15px; letter-spacing: 0.18px; line-height: 37px; text-align: center; white-space: nowrap; }
.vis { position: absolute; }
.vis text { font-family: "Liberation Serif", serif; font-size: 9.500px; fill: #fff; stroke: #fff; stroke-width: 0.200px; }
.vis .ttl { font-size: 13px; font-weight: bold; font-style: italic; stroke: none; }
.vis .b { font-weight: bold; stroke: none; }
.v-start, .v-end, .v-donut, .v-bar, .v-pie { box-shadow: inset 0 0 0 2px #f4c3ae; border-radius: 17px; }
.v-start { left: 230px; top: 58px; width: 415px; height: 150px; }
.v-end { left: 230px; top: 207px; width: 437px; height: 150px; }
.v-donut { left: 299px; top: 368px; width: 276px; height: 150px; }
.v-bar { left: 645px; top: 0; width: 276px; height: 184px; }
.v-pie { left: 645px; top: 357px; width: 253px; height: 150px; }
.grid { fill: none; stroke: #7c7c7c; stroke-width: 1; stroke-dasharray: 1 3; }
.lead { fill: none; stroke: #2e2d2c; stroke-width: 1; }
.matrix { position: absolute; left: 683px; top: 196px; width: 200px; }
.matrix h3 { color: #fff; text-align: center; padding-left: 10px; margin: 0 -5px 2px; letter-spacing: 0.2px; }
.matrix table { table-layout: fixed; width: 200px; border-collapse: separate; border-spacing: 0; font: 10px/12px "Noto Sans", sans-serif; color: #252423; background: #fff; }
.c1 { width: 37px; }
.c2 { width: 36px; }
.c3 { width: 46px; }
.c4 { width: 46px; }
.c5 { width: 35px; }
.matrix th { background: #252423; color: #fff; font-weight: normal; text-align: left; padding: 0 0 0 4px; letter-spacing: -0.3px; }
.matrix thead th { height: 23px; padding-bottom: 4px; border-bottom: 1px solid #2b74c0; }
.matrix tbody th { border-right: 1px solid #2b74c0; border-bottom: 1px solid #9a5a40; }
.matrix td { height: 17px; padding: 0 3px 0 0; text-align: right; border-right: 1px solid #c8c6c4; border-bottom: 1px solid #f0a688; letter-spacing: -0.15px; }
.matrix tbody tr:nth-child(3) > * { height: 18px; }
.matrix tr.tot > * { border-bottom-color: #c8c6c4; }
.matrix .tot, .matrix tr.tot td { font-weight: bold; }

.tabs { height: 36px; background: #f3f2f1; border-bottom: 1px solid #dddbda; display: flex; align-items: flex-start; padding-left: 10px; }
.desk { width: 24px; height: 31px; border-bottom: 3px solid #117865; padding: 7px 0 0 1px; border-radius: 1px; }
.phone { margin: 5px 0 0 25px; }
.prev { margin: 14px 0 0 20px; }
.next { margin: 14px 0 0 16px; }
.tab { margin-left: 6px; width: 77px; height: 35px; background: #fff; border-left: 1px solid #a19f9d; border-right: 1px solid #c8c6c4; border-bottom: 4px solid #117865; line-height: 37px; text-align: center; letter-spacing: -0.35px; }
.add { width: 39px; height: 35px; background: #117865; display: flex; align-items: center; justify-content: center; }
.panes { width: 33px; background: #faf9f8; border-left: 1px solid #dddbda; border-bottom: 1px solid #dddbda; display: flex; flex-direction: column; align-items: center; padding-top: 6px; }
.p { margin-bottom: 12px; }
.gear { margin-top: auto; width: 32px; height: 32px; border-top: 1px solid #dddbda; display: flex; align-items: center; justify-content: center; }
.status { height: 23px; background: #f3f2f1; display: flex; align-items: center; padding: 2px 4px 0 4px; color: #484644; letter-spacing: -0.28px; flex: none; }
.zoom { margin: -4px 11px 0 auto; }
.pct { width: 42px; color: #605e5c; letter-spacing: -0.5px; }
.fit { margin: -2px 14px 0 0; }
.update { width: 192px; white-space: nowrap; }
```
